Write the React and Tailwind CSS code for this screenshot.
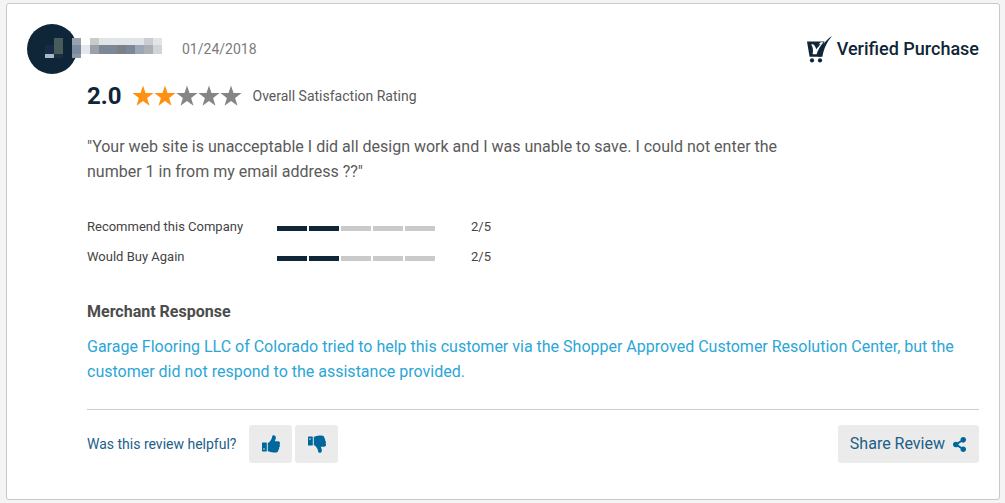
import React, { useState } from 'react'
import { FaShareAlt } from 'react-icons/fa'

const STAR_COUNT = 5

const review = {
  date: '01/24/2018',
  rating: 2,
  text: '"Your web site is unacceptable I did all design work and I was unable to save. I could not enter the number 1 in from my email address ??"',
  scores: [
    { label: 'Recommend this Company', value: 2 },
    { label: 'Would Buy Again', value: 2 }
  ],
  response: 'Garage Flooring LLC of Colorado tried to help this customer via the Shopper Approved Customer Resolution Center, but the customer did not respond to the assistance provided.'
}

// x, y, width, height, fill
const MOSAIC = [
  [18, 21, 9, 9, '#172b49'],
  [27, 14, 9, 16, '#4a5b5c'],
  [18, 30, 9, 4, '#a7b8c8'],
  [27, 30, 9, 4, '#1c2f42'],
  [45, 14, 9, 7, '#98a3af'],
  [45, 21, 9, 9, '#7c8b9d'],
  [45, 30, 9, 4, '#8c99a8'],
  [54, 21, 9, 9, '#e4e7ed'],
  [63, 14, 9, 7, '#c9cbca'],
  [72, 14, 45, 7, '#e1e5e7'],
  [117, 14, 9, 7, '#c8ced4'],
  [126, 14, 9, 7, '#e2e4e6'],
  [63, 21, 9, 9, '#9da1a7'],
  [72, 21, 18, 9, '#7c8898'],
  [90, 21, 9, 9, '#7d8187'],
  [99, 21, 9, 9, '#7c8798'],
  [108, 21, 9, 9, '#9ba7b9'],
  [117, 21, 9, 9, '#abb0b6'],
  [126, 21, 9, 9, '#d0d4d8']
]

const Reviewer = () => (
  <svg width="135" height="50" viewBox="0 0 135 50" role="img" aria-label="Hidden reviewer">
    <circle cx="25" cy="25" r="25" fill="#0f2538" />
    {MOSAIC.map(([x, y, width, height, fill]) => (
      <rect key={`${x}-${y}`} x={x} y={y} width={width} height={height} fill={fill} />
    ))}
  </svg>
)

const CartCheck = () => (
  <svg width="25" height="27" viewBox="0 0 25 27" fill="#0f2538" aria-hidden="true">
    <path d="M0 5.5H17.5L13.8 20.8H2.6L2.2 18.6Z" />
    <path d="M4.2 8.6C6.6 7.6 8.2 9 9 11.2L13.6 6.2H16.5C13 10 10.8 14.5 9.6 18.2H5.6C6.4 14.5 6 11 4.2 8.6Z" fill="white" />
    <path d="M5.8 8.3H13.5L9.2 13.2C8.6 10.6 7.6 9 5.8 8.3Z" />
    <path d="M25 0C20.2 5.6 17 12 15.4 20.8H11.2C13.2 12 17.6 4.6 25 0Z" />
    <circle cx="5" cy="24.4" r="2.1" />
    <circle cx="13" cy="24.4" r="2.1" />
  </svg>
)

const Star = ({ filled }) => (
  <svg width="22" height="22" viewBox="0 0 22 22" className={filled ? 'text-[#ff9011]' : 'text-[#858585]'} fill="currentColor" aria-hidden="true">
    <path d="M11 0.5L13.5 8.1H21.6L15.1 12.9L17.5 20.7L11 16L4.5 20.7L6.9 12.9L0.4 8.1H8.5Z" />
  </svg>
)

const Thumb = ({ down }) => (
  <svg width="18" height="18" viewBox="0 0 18 18" fill="currentColor" aria-hidden="true">
    <g transform={down ? 'matrix(1 0 0 -1 0 18)' : undefined}>
      <path fillRule="evenodd" d="M0.6 7.4H4.2Q4.8 7.4 4.8 8V15.8Q4.8 16.4 4.2 16.4H0.6Q0 16.4 0 15.8V8Q0 7.4 0.6 7.4ZM2 13.2A0.8 0.8 0 1 0 2 14.8A0.8 0.8 0 1 0 2 13.2Z" />
      <path d="M5.8 8C7.6 7.2 8.8 5.4 9.6 3.8C10.2 2.4 10 0.2 11.4 0.2C13.8 0.2 14.2 2.2 13.6 4L12.8 6.3H16C17.8 6.3 18.6 8 17.6 9.4C18.2 10.6 17.9 11.8 17.1 12.5C17.4 13.7 17 14.6 16.3 15.1C16.4 16.8 15.2 17.6 13.2 17.6H11.4C9 17.6 7.8 16.4 5.8 16.3Z" />
    </g>
  </svg>
)

const ScoreBar = ({ value }) => (
  <div className="flex w-[158px] gap-0.5" aria-hidden="true">
    {[1, 2, 3, 4, 5].map(step => (
      <div key={step} className={step <= value ? 'h-[5px] flex-1 bg-[#0f2538]' : 'h-[5px] flex-1 bg-[#cacaca]'} />
    ))}
  </div>
)

const App = () => {
  const [vote, setVote] = useState(null)

  return (
    <div className="min-h-screen bg-[#f4f4f4] pt-[3px] pr-[5px] pb-[3px] pl-[6px] font-['Roboto',sans-serif] text-[#5a5a5a]">
      <article className="rounded-[3px] border border-[#c9c9c9] bg-white px-5 pt-5 pb-9">
        {/* Reviewer */}
        <header className="flex items-center">
          <Reviewer />
          <time dateTime="2018-01-24" className="ml-5 text-sm text-[#7b7b7b]">{review.date}</time>
          <div className="ml-auto flex items-center gap-[5px] text-[#0f2538]">
            <CartCheck />
            <span className="text-lg font-medium">Verified Purchase</span>
          </div>
        </header>

        <div className="pl-[60px]">
          {/* Overall rating */}
          <div className="mt-2.5 flex h-6 items-center">
            <span className="text-2xl font-bold text-[#0f2538]">{review.rating.toFixed(1)}</span>
            <div className="ml-2.5 flex">
              {Array.from({ length: STAR_COUNT }, (_, i) => (
                <Star key={i} filled={i < review.rating} />
              ))}
            </div>
            <span className="ml-[11px] text-sm">Overall Satisfaction Rating</span>
          </div>

          <p className="mt-[26px] max-w-[710px] text-base leading-[25px]">{review.text}</p>

          {/* Scores */}
          <table className="mt-7 text-[13px] text-[#444444]">
            <tbody>
              {review.scores.map(({ label, value }) => (
                <tr key={label} className="h-[30px]">
                  <th scope="row" className="w-[190px] text-left font-normal">{label}</th>
                  <td className="pt-[3px] pr-9"><ScoreBar value={value} /></td>
                  <td>{value}/5</td>
                </tr>
              ))}
            </tbody>
          </table>

          {/* Merchant response */}
          <h2 className="mt-7 text-base leading-6 font-bold text-[#4c4c4c]">Merchant Response</h2>
          <p className="mt-2.5 text-base leading-[25px] text-[#2ba6d6]">{review.response}</p>

          <footer className="mt-[25px] flex items-center border-t border-[#cccccc] pt-[15px] text-[#1c6089]">
            <span className="text-sm">Was this review helpful?</span>
            <div className="ml-[13px] flex gap-[3px]">
              <button
                type="button"
                aria-label="Helpful"
                aria-pressed={vote === 'up'}
                onClick={() => setVote('up')}
                className="flex h-[38px] w-[43px] items-center justify-center rounded-[3px] bg-[#ebebeb] text-[#00679c]"
              >
                <Thumb />
              </button>
              <button
                type="button"
                aria-label="Not helpful"
                aria-pressed={vote === 'down'}
                onClick={() => setVote('down')}
                className="flex h-[38px] w-[43px] items-center justify-center rounded-[3px] bg-[#ebebeb] text-[#00679c]"
              >
                <Thumb down />
              </button>
            </div>
            <button type="button" className="ml-auto flex h-[38px] items-center gap-[7px] rounded-[3px] bg-[#ebebeb] px-3 text-base">
              Share Review
              <FaShareAlt className="h-[15px] w-[15px] text-[#00679c]" />
            </button>
          </footer>
        </div>
      </article>
    </div>
  )
}

export default App
